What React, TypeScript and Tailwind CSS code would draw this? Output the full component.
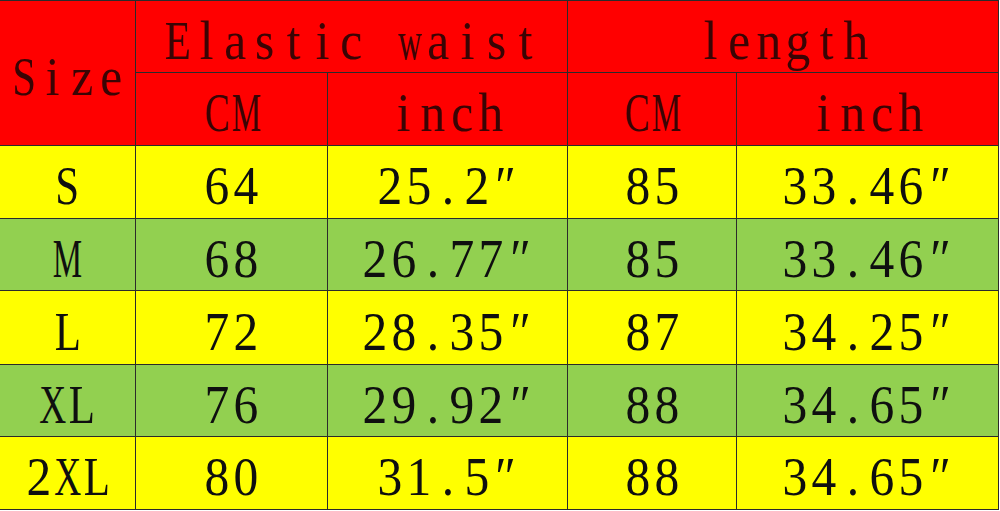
import React from "react";

// Size chart: two header rows in red, then alternating yellow / green rows.
// Every glyph sits in a fixed 29px slot, like the half-width Latin of a Song font.

const rows = [
  { size: "S", waistCm: "64", waistIn: "25.2″", lenCm: "85", lenIn: "33.46″" },
  { size: "M", waistCm: "68", waistIn: "26.77″", lenCm: "85", lenIn: "33.46″" },
  { size: "L", waistCm: "72", waistIn: "28.35″", lenCm: "87", lenIn: "34.25″" },
  { size: "XL", waistCm: "76", waistIn: "29.92″", lenCm: "88", lenIn: "34.65″" },
  { size: "2XL", waistCm: "80", waistIn: "31.5″", lenCm: "88", lenIn: "34.65″" },
];

// wide Times glyphs get squeezed harder so they stay inside their slot
function squeeze(ch: string) {
  if (ch === "M" || ch === "w") return "scale-x-[0.6]";
  if (ch === "X" || ch === "C") return "scale-x-[0.68]";
  if (/[A-Z]/.test(ch)) return "scale-x-[0.78]";
  return "scale-x-[0.9]";
}

function Mono({ text }: { text: string }) {
  return (
    <span className="inline-flex whitespace-pre">
      {Array.from(text).map((ch, i) => (
        <span key={i} className="inline-flex w-[29px] justify-center">
          <span className={`inline-block ${squeeze(ch)}`}>{ch}</span>
        </span>
      ))}
    </span>
  );
}

function Cell({
  text,
  bg,
  className = "",
}: {
  text: string;
  bg: string;
  className?: string;
}) {
  return (
    <div className={`flex items-center justify-center pt-[7px] ${bg} ${className}`}>
      <Mono text={text} />
    </div>
  );
}

export default function App() {
  return (
    <div className="w-[1000px] h-[511px] bg-white">
      <div
        className="grid w-[999px] gap-px bg-[#2b2b2b] pt-px pr-px pb-px text-[55px] leading-none text-[#0f0f0f] grid-cols-[135px_191px_239px_168px_261px] grid-rows-[71px_72px_72px_71px_73px_71px_72px]"
        style={{ fontFamily: '"Liberation Serif", "Times New Roman", serif' }}
      >
        <Cell text="Size" bg="bg-[#ff0000]" className="row-span-2 text-[#3a0404]" />
        <Cell text="Elastic waist" bg="bg-[#ff0000]" className="col-span-2 text-[#3a0404]" />
        <Cell text="length" bg="bg-[#ff0000]" className="col-span-2 text-[#3a0404]" />
        <Cell text="CM" bg="bg-[#ff0000]" className="text-[#3a0404]" />
        <Cell text="inch" bg="bg-[#ff0000]" className="text-[#3a0404]" />
        <Cell text="CM" bg="bg-[#ff0000]" className="text-[#3a0404]" />
        <Cell text="inch" bg="bg-[#ff0000]" className="text-[#3a0404]" />

        {rows.map((r, i) => {
          const bg = i % 2 === 0 ? "bg-[#ffff00]" : "bg-[#92d050]";
          return (
            <React.Fragment key={r.size}>
              <Cell text={r.size} bg={bg} />
              <Cell text={r.waistCm} bg={bg} />
              <Cell text={r.waistIn} bg={bg} />
              <Cell text={r.lenCm} bg={bg} />
              <Cell text={r.lenIn} bg={bg} />
            </React.Fragment>
          );
        })}
      </div>
    </div>
  );
}
